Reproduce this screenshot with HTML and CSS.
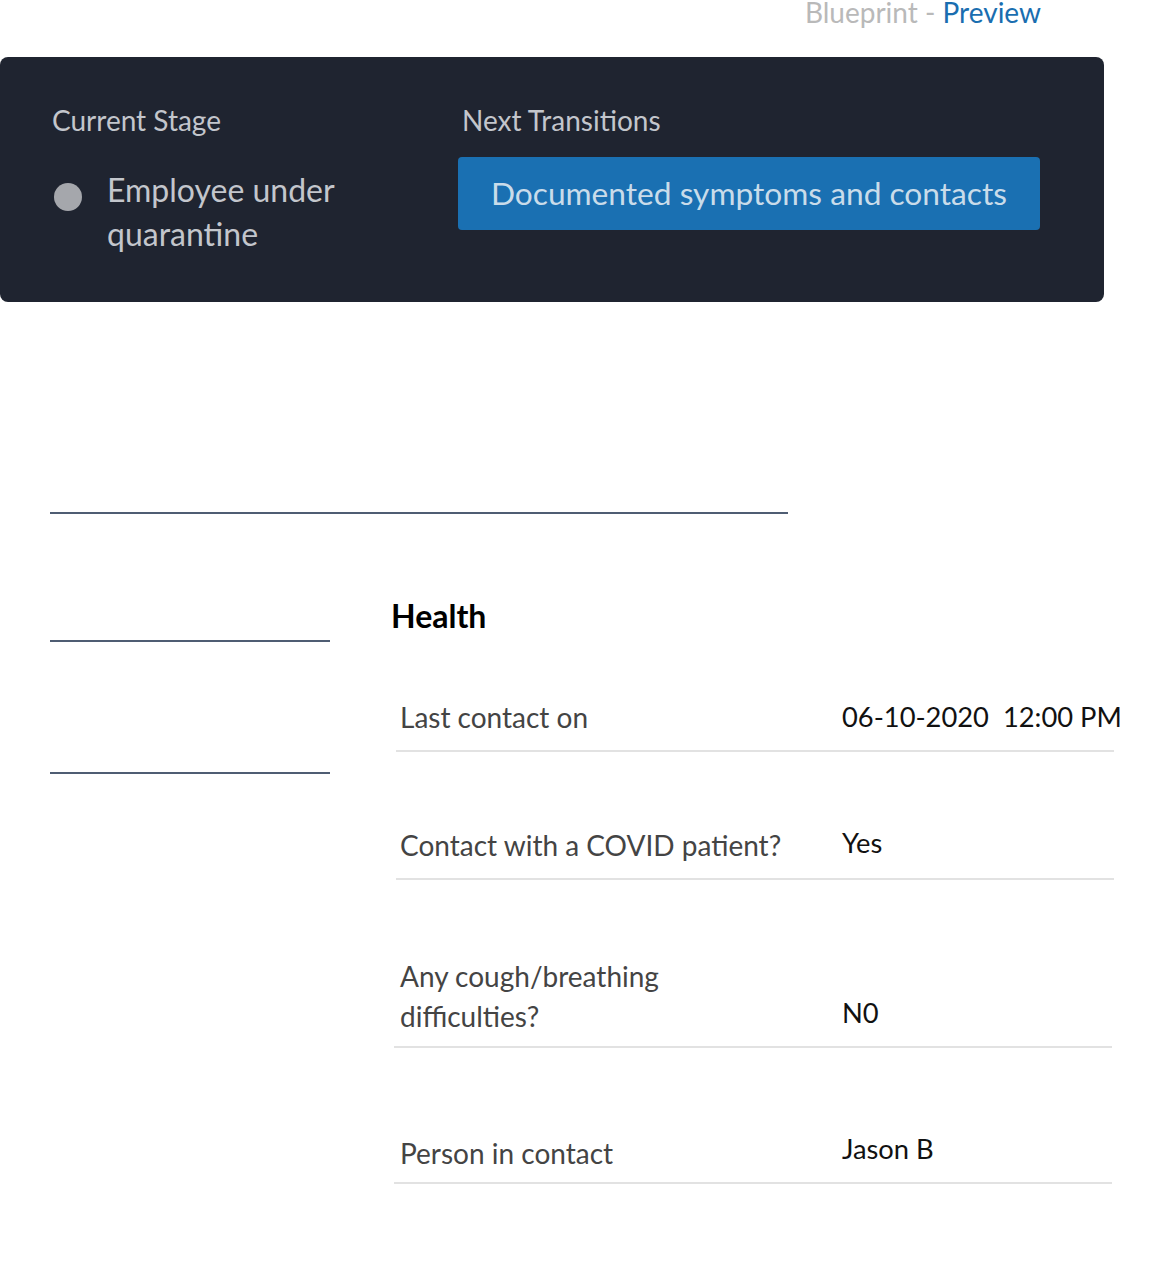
FILE: index.html
```html
<!DOCTYPE html>
<html>
<head>
<meta charset="utf-8">
<link rel="stylesheet" href="styles.css">
</head>
<body>
<div class="topbar"><span class="bp">Blueprint - </span><span class="pv">Preview</span></div>
<div class="panel">
  <div class="col-left">
    <div class="plabel">Current Stage</div>
    <div class="stage">
      <span class="dot"></span>
      <span class="stage-name">Employee under quarantine</span>
    </div>
  </div>
  <div class="col-right">
    <div class="plabel nt">Next Transitions</div>
    <div class="btn">Documented symptoms and contacts</div>
  </div>
</div>
<div class="content">
  <div class="rule-long"></div>
  <div class="section">
    <div class="side">
      <div class="rule-short r1"></div>
      <div class="rule-short r2"></div>
    </div>
    <div class="main">
      <div class="heading">Health</div>
      <div class="row r-a">
        <div class="lbl">Last contact on</div>
        <div class="val">06-10-2020&nbsp; 12:00 PM</div>
      </div>
      <div class="row r-b">
        <div class="lbl">Contact with a COVID patient?</div>
        <div class="val">Yes</div>
      </div>
      <div class="row r-c">
        <div class="lbl">Any cough/breathing difficulties?</div>
        <div class="val">N0</div>
      </div>
      <div class="row r-d">
        <div class="lbl">Person in contact</div>
        <div class="val">Jason B</div>
      </div>
    </div>
  </div>
</div>
</body>
</html>
```

FILE: styles.css
```css
html, body {
  margin: 0;
  padding: 0;
  background: #ffffff;
  font-family: Lato, "Open Sans", sans-serif;
}
.topbar {
  width: 1041px;
  text-align: right;
  font-size: 28px;
  line-height: 28px;
  height: 59px;
  margin-top: -2px;
}
.bp { color: #b9b9b9; }
.pv { color: #1a6eb0; }
.panel {
  width: 1104px;
  height: 245px;
  box-sizing: border-box;
  background: #1f2430;
  border-radius: 8px;
  display: flex;
  padding: 44px 0 0 52px;
}
.col-left { width: 406px; }
.plabel {
  color: #c3c6cc;
  font-size: 28px;
  line-height: 38px;
}
.nt { padding-left: 4px; }
.stage {
  display: flex;
  align-items: flex-start;
  margin-top: 29px;
}
.dot {
  width: 28px;
  height: 28px;
  border-radius: 50%;
  background: #a5a7ac;
  margin: 15px 25px 0 2px;
  flex: none;
}
.stage-name {
  color: #c3c6cc;
  font-size: 32px;
  line-height: 44px;
  width: 260px;
}
.btn {
  margin-top: 18px;
  width: 582px;
  height: 73px;
  box-sizing: border-box;
  background: #1a70b2;
  border-radius: 4px;
  color: #c9dcea;
  font-size: 31.7px;
  line-height: 73px;
  text-align: center;
}
.content {
  padding-left: 50px;
}
.rule-long {
  margin-top: 210px;
  width: 738px;
  height: 2px;
  background: #4f5d73;
}
.section {
  display: flex;
}
.side {
  width: 280px;
  flex: none;
}
.rule-short {
  height: 2px;
  background: #4f5d73;
}
.r1 { margin-top: 126px; }
.r2 { margin-top: 130px; }
.main {
  margin-left: 61px;
  width: 724px;
}
.heading {
  margin-top: 82px;
  font-size: 32px;
  font-weight: 700;
  line-height: 40px;
  color: #000;
}
.row {
  display: flex;
  align-items: flex-end;
  width: 718px;
  box-sizing: border-box;
  border-bottom: 2px solid #e2e2e2;
  margin-left: 5px;
  padding-left: 4px;
  padding-bottom: 13px;
}
.lbl {
  width: 390px;
  margin-right: 52px;
  flex: none;
  color: #444444;
  font-size: 28px;
  line-height: 40px;
}
.val {
  color: #111111;
  font-size: 27.3px;
  line-height: 40px;
  white-space: nowrap;
}
.r-a { margin-top: 61px; }
.r-b { margin-top: 73px; }
.r-b .val { transform: translateY(-2px); }
.r-c { margin-top: 76px; margin-left: 3px; padding-left: 6px; padding-bottom: 10px; }
.r-c .val { transform: translateY(-3px); }
.r-d { margin-top: 85px; margin-left: 3px; padding-left: 6px; padding-bottom: 9px; }
.r-d .val { transform: translateY(-4px); }
```
